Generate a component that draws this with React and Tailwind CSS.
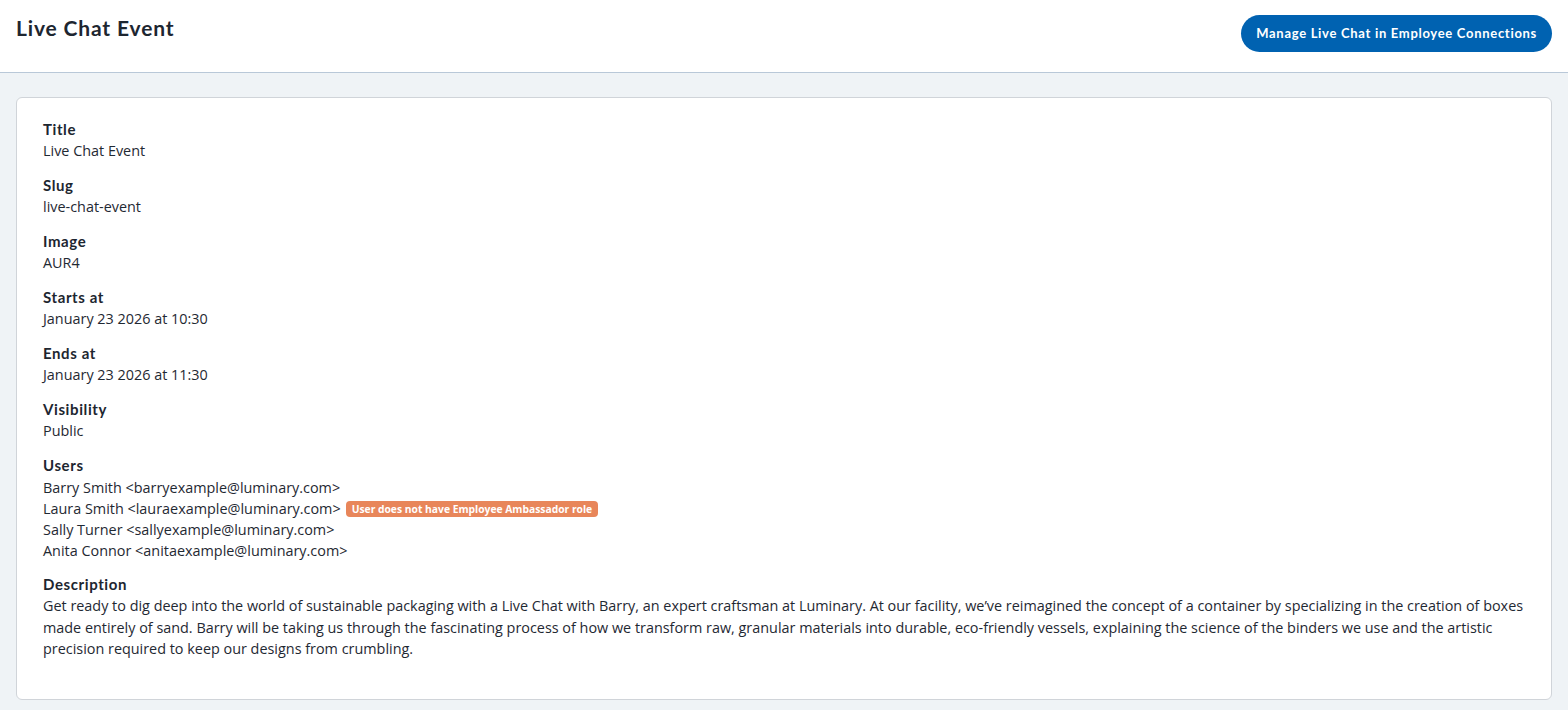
import React from 'react';

const heading = { fontFamily: 'Lato, "Noto Sans", sans-serif' };

const fields = [
  { label: 'Title', value: 'Live Chat Event' },
  { label: 'Slug', value: 'live-chat-event' },
  { label: 'Image', value: 'AUR4' },
  { label: 'Starts at', value: 'January 23 2026 at 10:30' },
  { label: 'Ends at', value: 'January 23 2026 at 11:30' },
  { label: 'Visibility', value: 'Public' },
];

const users = [
  { name: 'Barry Smith', email: 'barryexample@luminary.com' },
  { name: 'Laura Smith', email: 'lauraexample@luminary.com', warn: true },
  { name: 'Sally Turner', email: 'sallyexample@luminary.com' },
  { name: 'Anita Connor', email: 'anitaexample@luminary.com' },
];

function Label({ children }) {
  return (
    <div className="text-[15px] font-bold leading-[22px] tracking-[0.6px] text-[#1d2630]" style={heading}>
      {children}
    </div>
  );
}

export default function App() {
  return (
    <div className="min-h-[710px] bg-[#eff3f6] text-[#1f2933]" style={{ fontFamily: '"Open Sans", sans-serif' }}>
      <header className="h-[73px] bg-white border-b border-[#b9c8d8] flex items-start justify-between px-4">
        <h1 className="mt-[15px] text-[21px] font-bold text-[#1d2630] leading-[26px] tracking-[0.85px]" style={heading}>
          Live Chat Event
        </h1>
        <button className="mt-[15px] h-[37px] px-[15px] rounded-full bg-[#0062b1] text-white text-[13px] font-bold tracking-[0.7px]" style={heading}>
          Manage Live Chat in Employee Connections
        </button>
      </header>

      <main className="px-4 pt-6 pb-[11px]">
        <div className="bg-white border border-[#d0d4d9] rounded-md pl-[26px] pr-6 pt-5 pb-[39px] flex flex-col gap-3">
          {fields.map((f) => (
            <div key={f.label}>
              <Label>{f.label}</Label>
              <div className="text-[14.4px] leading-[22px]">{f.value}</div>
            </div>
          ))}
          <div>
            <Label>Users</Label>
            <div className="text-[14.4px] leading-[21px] pt-[1px]">
              {users.map((u) => (
                <div key={u.email} className="flex items-center">
                  <span>{u.name} &lt;{u.email}&gt;</span>
                  {u.warn && (
                    <span className="ml-[5px] h-[16px] px-[6px] rounded bg-[#e8865a] text-white text-[10.3px] font-bold leading-[16px]">
                      User does not have Employee Ambassador role
                    </span>
                  )}
                </div>
              ))}
            </div>
          </div>
          <div>
            <Label>Description</Label>
            <p className="text-[14.4px] leading-[21.5px]">
              Get ready to dig deep into the world of sustainable packaging with a Live Chat with Barry, an expert craftsman at Luminary. At our facility, we’ve reimagined the concept of a container by specializing in the creation of boxes made entirely of sand. Barry will be taking us through the fascinating process of how we transform raw, granular materials into durable, eco-friendly vessels, explaining the science of the binders we use and the artistic precision required to keep our designs from crumbling.
            </p>
          </div>
        </div>
      </main>
    </div>
  );
}
